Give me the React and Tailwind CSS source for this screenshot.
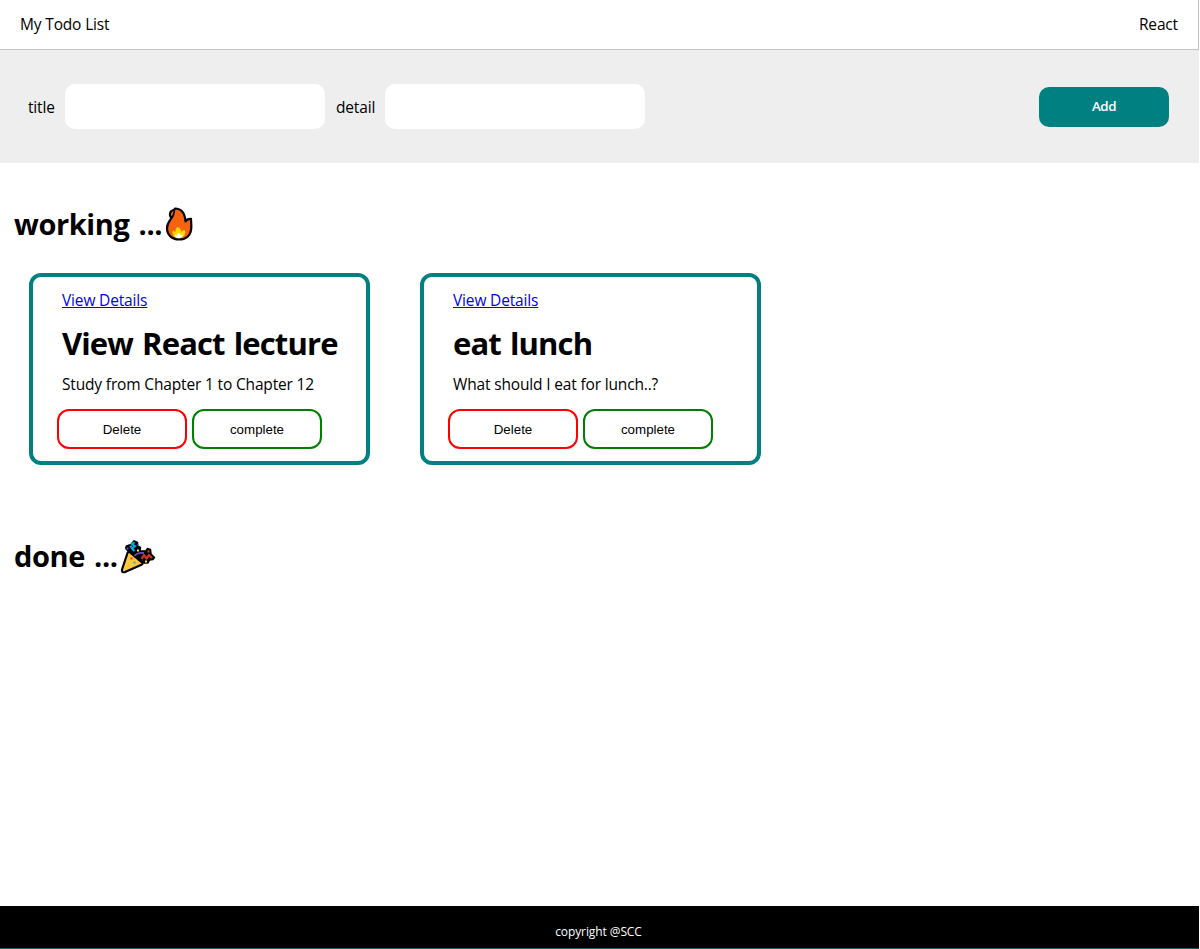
function FireIcon() {
  return (
    <svg className="h-[34px] w-[28px] shrink-0" viewBox="0 0 28 34">
      <path
        d="M10 1.5C17 1.5 20 7 20.5 14.5C21.5 12.5 23 11.6 26 11.8C26 15 26.6 18 26.2 22C25.5 29 20.5 32.5 14 32.5C7 32.5 2 28 2 21C2 16.5 4.5 14 6.5 11C4.5 9.500 4.300 5.500 6.500 4C7.800 3 9.500 3.200 10 1.500Z"
        fill="#f7630c" stroke="#000" strokeWidth="2.2" strokeLinejoin="round"
      />
      <path d="M9.500 3.500C8.500 6.500 9.500 8 6.500 11" fill="none" stroke="#000" strokeWidth="1.800" />
      <path d="M12.500 20C15 20.500 16 22.500 16.300 25C17.500 23.600 18.500 23 20 23.500C20.500 26 20.500 30.500 14 31C9 31 6.500 27.500 8 23.500C9 24 9.500 24.500 10.500 25C10.300 23 11 21 12.500 20Z" fill="#ffd800" />
      <path d="M13.500 26C15 26.500 15.500 27.300 15.600 28.500L18 27.500C18 30 16 31.300 13.800 31.300C11.500 31.300 10 30 9.800 28L12 28.700C12 27.500 12.500 26.600 13.500 26Z" fill="#fff" />
    </svg>
  );
}

function PartyIcon() {
  return (
    <svg className="h-[35px] w-[36px] shrink-0" viewBox="0 0 36 35">
      <path d="M10 13L8 11.500Q4.500 10 6.500 7L11 5.500L14 1.800L17.500 3.500L17.500 7L20.500 8.500L20 12L26 12L27.500 9.500L30.500 10.500L31 15L34.500 18.500L33 20.500L29.500 21L28 24L24 24L21 21.500Z" fill="#000" stroke="#000" strokeWidth="1.500" strokeLinejoin="round" />
      <path d="M9.500 13L22.500 24Q23 25 21.500 25.800L5 33Q1.300 34 2 30.500L7.500 14Q8.300 12 9.500 13Z" fill="#ffc83d" stroke="#000" strokeWidth="2.200" strokeLinejoin="round" />
      <path d="M14.500 3.200L12 5L15 7L12 9.500L14.500 12M10 8.200L12 7" fill="none" stroke="#00b4f0" strokeWidth="2" />
      <path d="M21.500 20L24 16.200L26.500 19.500L29 16.200L32 19" fill="none" stroke="#d13420" strokeWidth="2.200" />
      <path d="M14.500 17Q17.500 13 24 14" fill="none" stroke="#6b4bb5" strokeWidth="1.800" />
      <path d="M6.500 8.500h2v2h-2z" fill="#6b4bb5" />
      <path d="M17 10.500h2v2h-2zM25 21.500h2v2h-2z" fill="#fff100" />
      <path d="M27.500 11.500h2v2h-2zM10.500 18.500h2v2h-2z" fill="#f03a17" />
      <path d="M17.500 5h1.500v1.500h-1.500zM13.500 22.500h2v2h-2z" fill="#00b4f0" />
    </svg>
  );
}

function Card({ title, detail }) {
  return (
    <article className="h-[192px] w-[341px] rounded-xl border-4 border-[#008080] px-6">
      <div className="px-[5px] pt-[11px]">
        <a href="#" className="block h-6 leading-6 text-[#0000ee] underline">View Details</a>
        <h2 className="mt-[7px] h-[51px] whitespace-nowrap text-[31px] font-bold leading-[48px] tracking-[-0.880px] [word-spacing:2px]">{title}</h2>
        <p className="mt-0.5 h-6 whitespace-nowrap leading-6">{detail}</p>
      </div>
      <div className="mt-[13px] flex gap-[5px] font-['Liberation_Sans',sans-serif] text-[13.333px] font-normal tracking-normal">
        <button className="h-10 w-[130px] rounded-xl border-2 border-[#ff0000] pt-0.5">Delete</button>
        <button className="h-10 w-[130px] rounded-xl border-2 border-[#008000] pt-0.5">complete</button>
      </div>
    </article>
  );
}

export default function App() {
  return (
    <div className="flex h-[949px] w-[1199px] flex-col overflow-hidden bg-white font-['Open_Sans',sans-serif] text-[15.5px] tracking-[-0.160px] text-black">
      <header className="flex h-[50px] items-center justify-between border-b border-r border-[#c4c4c4] px-5 pt-px">
        <span>My Todo List</span>
        <span>React</span>
      </header>
      <form className="flex h-[113px] items-center justify-between bg-[#eeeeee] pl-7 pr-[30px]">
        <div className="flex items-center">
          <label className="w-[37px] pt-0.5" htmlFor="title">title</label>
          <input id="title" className="h-[45px] w-[260px] rounded-[10px] bg-white px-3" />
          <label className="ml-[11px] w-[49px] pt-0.5" htmlFor="detail">detail</label>
          <input id="detail" className="h-[45px] w-[260px] rounded-[10px] bg-white px-3" />
        </div>
        <button type="button" className="h-10 w-[130px] rounded-[10px] bg-[#008080] text-[13.333px] font-semibold tracking-[-0.400px] text-white">Add</button>
      </form>
      <main className="grow">
        <section className="h-[332px] pt-[43px]">
          <h1 className="flex h-9 items-center pl-3.5 text-[29px] font-bold tracking-[-0.400px] [word-spacing:2px]">
            <span className="w-[151px] whitespace-nowrap">working ...</span><FireIcon />
          </h1>
          <div className="mt-[31px] flex gap-[50px] pl-[29px]">
            <Card title="View React lecture" detail="Study from Chapter 1 to Chapter 12" />
            <Card title="eat lunch" detail="What should I eat for lunch..?" />
          </div>
        </section>
        <section className="pt-[43px]">
          <h1 className="flex h-9 items-center pl-3.5 text-[29px] font-bold tracking-[-0.400px] [word-spacing:2px]">
            <span className="w-[106px] whitespace-nowrap">done ...</span><PartyIcon />
          </h1>
        </section>
      </main>
      <footer className="flex h-[43px] items-center justify-center border-b border-[#245a66] bg-black pr-0.5 pt-2.5 text-xs tracking-[-0.100px] text-white">copyright @SCC</footer>
    </div>
  );
}
